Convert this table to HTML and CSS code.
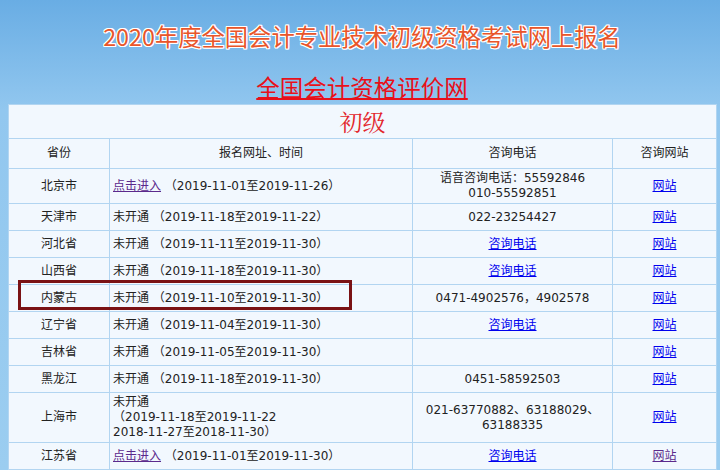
FILE: index.html
```html
<!DOCTYPE html>
<html lang="zh-CN">
<head>
<meta charset="utf-8">
<title>2020年度全国会计专业技术初级资格考试网上报名</title>
<link rel="stylesheet" href="styles.css">
</head>
<body>
<div class="page">
  <div class="head">
    <div class="title">2020年度全国会计专业技术初级资格考试网上报名</div>
    <div class="sub"><a href="#">全国会计资格评价网</a></div>
  </div>
  <div class="wrap">
    <table class="grid">
      <colgroup>
        <col class="c1"><col class="c2"><col class="c3"><col class="c4">
      </colgroup>
      <tr class="cap"><td colspan="4">初级</td></tr>
      <tr class="th">
        <td>省份</td><td class="ctr">报名网址、时间</td><td>咨询电话</td><td>咨询网站</td>
      </tr>
      <tr>
        <td>北京市</td>
        <td class="l"><a class="v" href="#">点击进入</a> （2019-11-01至2019-11-26）</td>
        <td>语音咨询电话：55592846<br>010-55592851</td>
        <td><a href="#">网站</a></td>
      </tr>
      <tr>
        <td>天津市</td>
        <td class="l">未开通 （2019-11-18至2019-11-22）</td>
        <td>022-23254427</td>
        <td><a href="#">网站</a></td>
      </tr>
      <tr>
        <td>河北省</td>
        <td class="l">未开通 （2019-11-11至2019-11-30）</td>
        <td><a href="#">咨询电话</a></td>
        <td><a href="#">网站</a></td>
      </tr>
      <tr>
        <td>山西省</td>
        <td class="l">未开通 （2019-11-18至2019-11-30）</td>
        <td><a href="#">咨询电话</a></td>
        <td><a href="#">网站</a></td>
      </tr>
      <tr>
        <td>内蒙古</td>
        <td class="l">未开通 （2019-11-10至2019-11-30）</td>
        <td>0471-4902576，4902578</td>
        <td><a href="#">网站</a></td>
      </tr>
      <tr>
        <td>辽宁省</td>
        <td class="l">未开通 （2019-11-04至2019-11-30）</td>
        <td><a href="#">咨询电话</a></td>
        <td><a href="#">网站</a></td>
      </tr>
      <tr>
        <td>吉林省</td>
        <td class="l">未开通 （2019-11-05至2019-11-30）</td>
        <td></td>
        <td><a href="#">网站</a></td>
      </tr>
      <tr>
        <td>黑龙江</td>
        <td class="l">未开通 （2019-11-18至2019-11-30）</td>
        <td>0451-58592503</td>
        <td><a href="#">网站</a></td>
      </tr>
      <tr>
        <td>上海市</td>
        <td class="l">未开通<br>（2019-11-18至2019-11-22<br>2018-11-27至2018-11-30）</td>
        <td>021-63770882、63188029、<br>63188335</td>
        <td><a href="#">网站</a></td>
      </tr>
      <tr>
        <td>江苏省</td>
        <td class="l"><a class="v" href="#">点击进入</a> （2019-11-01至2019-11-30）</td>
        <td><a href="#">咨询电话</a></td>
        <td><a class="v" href="#">网站</a></td>
      </tr>
    </table>
    <div class="mark"></div>
  </div>
</div>
</body>
</html>
```

FILE: styles.css
```css
html, body {
  margin: 0;
  padding: 0;
}
body {
  background: linear-gradient(#69ade4 0px, #92c7ef 110px, #9bcdf0 470px);
  min-height: 470px;
  font-family: "DejaVu Sans", "Noto Sans CJK SC", sans-serif;
  color: #222;
}
.page {
  padding: 0 0 0 8px;
  width: 708px;
}
.head {
  text-align: center;
  font-family: "Noto Sans CJK SC", sans-serif;
}
.title {
  padding-top: 21px;
  font-size: 23.3px;
  line-height: 30px;
  color: #e8552a;
  text-shadow: 1px 0 0 #fff, -1px 0 0 #fff, 0 1px 0 #fff, 0 -1px 0 #fff,
    1px 1px 0 #fff, -1px -1px 0 #fff, 1px -1px 0 #fff, -1px 1px 0 #fff;
}
.sub {
  margin-top: 21px;
  font-size: 23.5px;
  line-height: 30px;
}
.sub a {
  color: #e8101a;
  text-decoration: underline;
  text-decoration-thickness: 2px;
  text-underline-offset: 1px;
}
.wrap {
  position: relative;
  margin-top: 2px;
}
.grid {
  width: 708px;
  table-layout: fixed;
  border-collapse: collapse;
  background: #f2f8fe;
  font-size: 12px;
  line-height: 15px;
}
.c1 { width: 101px; }
.c2 { width: 303px; }
.c3 { width: 200px; }
.c4 { width: 104px; }
.grid td {
  border: 1px solid #b2d5f1;
  padding: 2px 3px;
  height: 22px;
  text-align: center;
  vertical-align: middle;
}
.grid td.l {
  text-align: left;
}
.grid .cap td {
  height: 33px;
  padding: 0;
  font-family: "Noto Serif CJK SC", "Noto Sans CJK SC", serif;
  font-size: 23px;
  line-height: 30px;
  color: #e3262c;
}
.grid .th td {
  height: 25px;
}
.grid a {
  color: #0000ee;
  text-decoration: underline;
}
.grid a.v {
  color: #5b2a8c;
}
.mark {
  position: absolute;
  left: 10px;
  top: 176px;
  width: 328px;
  height: 24px;
  border: 3px solid #7a1214;
}
```
